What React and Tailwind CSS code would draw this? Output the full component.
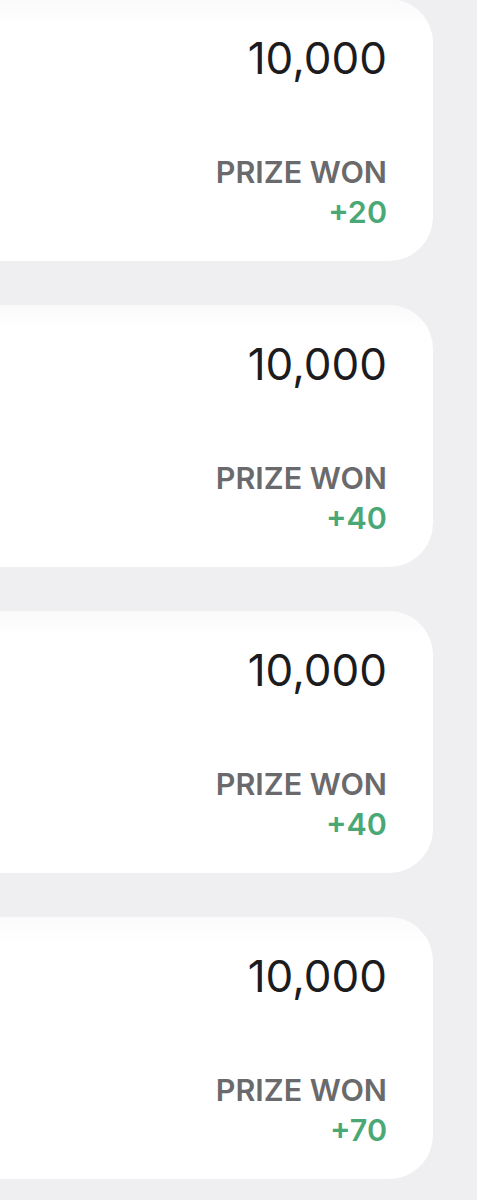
const ROWS = [
  { total: "10,000", prize: "+20" },
  { total: "10,000", prize: "+40" },
  { total: "10,000", prize: "+40" },
  { total: "10,000", prize: "+70" },
];

function PrizeCard({ total, prize }) {
  return (
    <div className="-ml-[60px] h-[262px] rounded-[44px] bg-linear-to-b from-[#fafafb] to-white to-[10%] pr-[46px] pt-[37px] flex flex-col items-end">
      <div className="text-[44px] leading-none font-normal text-[#1c1c1e]">{total}</div>
      <div className="mt-[72px] text-[30.5px] leading-[40px] font-semibold text-[#6a6a6c]">PRIZE WON</div>
      <div className="text-[30.5px] leading-[40px] font-semibold text-[#4aa877]">{prize}</div>
    </div>
  );
}

export default function App() {
  return (
    <div
      className="min-h-[1200px] w-[477px] overflow-hidden bg-[#efeff2] pr-[44px] pb-[20px]"
      style={{ fontFamily: "Inter, 'Noto Sans', sans-serif" }}
    >
      <div className="-mt-[1px] flex flex-col gap-[44px]">
        {ROWS.map((r, i) => (
          <PrizeCard key={i} {...r} />
        ))}
      </div>
    </div>
  );
}
